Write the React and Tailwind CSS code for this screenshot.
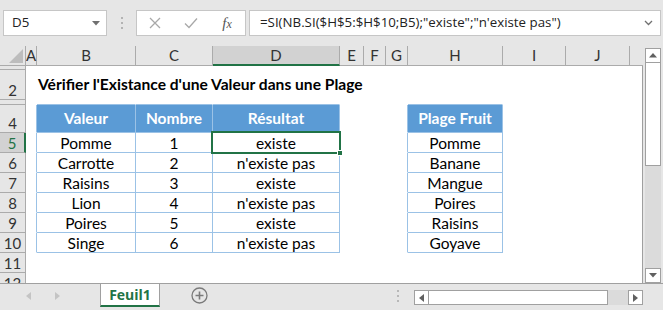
import React from "react";

const t1 = {
  5: ["Pomme", "1", "existe"],
  6: ["Carrotte", "2", "n'existe pas"],
  7: ["Raisins", "3", "existe"],
  8: ["Lion", "4", "n'existe pas"],
  9: ["Poires", "5", "existe"],
  10: ["Singe", "6", "n'existe pas"],
};
const t2 = { 5: "Pomme", 6: "Banane", 7: "Mangue", 8: "Poires", 9: "Raisins", 10: "Goyave" };
const letters = ["", "A", "B", "C", "D", "E", "F", "G", "H", "I", "J", ""];
const rowNums = [1, 2, 3, 4, 5, 6, 7, 8, 9, 10, 11, 12];

function HeaderRow() {
  return (
    <>
      <div className="relative bg-[#e6e6e6] border-r border-b border-[#ababab]">
        <svg className="absolute left-[9px] top-[3px]" width="14" height="14" viewBox="0 0 14 14">
          <polygon points="14,0 14,14 0,14" fill="#bdbdbd" />
        </svg>
      </div>
      {letters.slice(1).map((l, i) => {
        const c = i + 1;
        if (c === 11) return <div key={c} className="bg-[#e6e6e6] border-b border-[#ababab]" />;
        if (c === 4)
          return (
            <div key={c} className="bg-[#d2d2d2] border-r border-r-[#ababab] border-b-2 border-b-[#217346] flex items-center justify-center text-[#333] text-[15px]">
              {l}
            </div>
          );
        return (
          <div key={c} className="bg-[#e6e6e6] border-r border-b border-[#ababab] flex items-center justify-center text-[#333] text-[15px]">
            {l}
          </div>
        );
      })}
    </>
  );
}

function RowHeader({ r }) {
  const showLabel = r !== 1 && r !== 3;
  if (r === 5)
    return (
      <div className="bg-[#d2d2d2] border-r-2 border-r-[#217346] border-b border-b-[#ababab] flex items-end justify-center overflow-hidden">
        <span className="leading-[18px] text-[15px] text-[#217346]">{r}</span>
      </div>
    );
  if (r === 12)
    return (
      <div className="bg-[#e6e6e6] border-r border-[#ababab] overflow-hidden">
        <div className="h-[19px] flex items-end justify-center">
          <span className="leading-[18px] text-[15px] text-[#333]">{r}</span>
        </div>
      </div>
    );
  return (
    <div className="bg-[#e6e6e6] border-r border-b border-[#ababab] flex items-end justify-center overflow-hidden">
      {showLabel && <span className="leading-[18px] text-[15px] text-[#333]">{r}</span>}
    </div>
  );
}

function Cell({ r, c }) {
  const inRows = r >= 4 && r <= 10;
  const inT1 = inRows && c >= 2 && c <= 4;
  const inT2 = inRows && c === 8;
  const rightBlue = inT1 || inT2 || (inRows && (c === 1 || c === 7));
  const bottomBlue = inT1 || inT2 || (r === 3 && ((c >= 2 && c <= 4) || c === 8));
  const isHeader = r === 4 && (inT1 || inT2);
  const rb = rightBlue ? "border-r-[#9bc2e6]" : "border-r-transparent";
  const bb = bottomBlue ? "border-b-[#9bc2e6]" : "border-b-transparent";

  if (c === 11) {
    return <div className="bg-white border-r border-r-[#9f9f9f]" />;
  }

  let content = null;
  if (r === 2 && c === 2) {
    content = (
      <span className="relative z-10 whitespace-nowrap pl-[1px] font-bold text-[15.6px] text-black self-center">
        Vérifier l'Existance d'une Valeur dans une Plage
      </span>
    );
  }
  if (isHeader) {
    const txt = c === 2 ? "Valeur" : c === 3 ? "Nombre" : c === 4 ? "Résultat" : "Plage Fruit";
    return (
      <div className={`bg-[#5b9bd5] border-r border-b ${rb} ${bb} flex items-center justify-center text-white font-bold text-[15.5px]`}>
        {txt}
      </div>
    );
  }
  if (inRows && r >= 5) {
    const txt = inT1 ? t1[r][c - 2] : inT2 ? t2[r] : null;
    if (txt)
      content = <span className="w-full text-center leading-[18px] text-[15.5px] text-black">{txt}</span>;
  }

  return (
    <div className={`relative bg-white border-r border-b ${rb} ${bb} flex items-end`}>
      {content}
      {r === 5 && c === 4 && (
        <>
          <div className="absolute left-[-2px] top-[-2px] w-[130px] h-[23px] border-2 border-[#217346] z-10" />
          <div className="absolute left-[124px] top-[17px] w-[6px] h-[6px] bg-[#217346] border border-white z-20" />
        </>
      )}
    </div>
  );
}

function Toolbar() {
  return (
    <div className="h-[46px] flex items-start pt-[10px] pl-[3px] font-['Open_Sans',sans-serif]">
      <div className="w-[104px] h-[26px] bg-white border border-[#c6c6c6] flex items-center justify-between pl-[8px] pr-[6px]">
        <span className="text-[13.3px] text-[#222]">D5</span>
        <svg width="8" height="5" viewBox="0 0 8 5">
          <polygon points="0,0 8,0 4,4.5" fill="#707070" />
        </svg>
      </div>
      <div className="w-[29px] h-[26px] flex flex-col items-center justify-center gap-[3px]">
        <div className="w-[2px] h-[2px] bg-[#b3b3b3]" />
        <div className="w-[2px] h-[2px] bg-[#b3b3b3]" />
        <div className="w-[2px] h-[2px] bg-[#b3b3b3]" />
      </div>
      <div className="w-[110px] h-[26px] bg-white border border-[#c6c6c6] flex items-center">
        <div className="w-[36px] flex justify-center">
          <svg width="12" height="12" viewBox="0 0 12 12">
            <path d="M1 1 L11 11 M11 1 L1 11" stroke="#a8a8a8" strokeWidth="1.3" fill="none" />
          </svg>
        </div>
        <div className="w-[36px] flex justify-center">
          <svg width="14" height="12" viewBox="0 0 14 12">
            <path d="M1 6.5 L5 10.5 L13 1.5" stroke="#a8a8a8" strokeWidth="1.3" fill="none" />
          </svg>
        </div>
        <div className="w-[36px] flex justify-center">
          <span className="italic font-['Liberation_Serif',serif] text-[15px] text-[#555] leading-none">
            f<span className="text-[12px]">x</span>
          </span>
        </div>
      </div>
      <div className="ml-[3px] w-[412px] h-[26px] bg-white border border-[#c6c6c6] flex items-center justify-between pl-[10px] pr-[7px]">
        <span className="text-[13.3px] text-[#222] whitespace-nowrap">=SI(NB.SI($H$5:$H$10;B5);"existe";"n'existe pas")</span>
        <svg width="9" height="6" viewBox="0 0 9 6">
          <path d="M1 1 L4.5 4.5 L8 1" stroke="#707070" strokeWidth="1.3" fill="none" />
        </svg>
      </div>
    </div>
  );
}

function VScroll() {
  return (
    <div className="w-[20px] pl-[2px] pt-[2px] flex">
      <div className="w-[16px] flex flex-col">
        <div className="h-[15px] bg-white border border-[#a0a0a0] flex items-center justify-center">
          <svg width="8" height="5" viewBox="0 0 8 5"><polygon points="0,4.5 8,4.5 4,0" fill="#606060" /></svg>
        </div>
        <div className="h-[103px] bg-white border border-[#a0a0a0] border-t-0" />
        <div className="flex-1 bg-[#dbdbdb]" />
        <div className="h-[15px] bg-white border border-[#a0a0a0] flex items-center justify-center">
          <svg width="8" height="5" viewBox="0 0 8 5"><polygon points="0,0 8,0 4,4.5" fill="#606060" /></svg>
        </div>
      </div>
    </div>
  );
}

function TabBar() {
  return (
    <div className="h-[27px] border-t border-[#a0a0a0] flex items-start font-['Open_Sans',sans-serif]">
      <div className="w-[100px] h-[23px] flex items-center">
        <svg className="ml-[26px]" width="5" height="8" viewBox="0 0 5 8"><polygon points="5,0 5,8 0,4" fill="#c4c4c4" /></svg>
        <svg className="ml-[24px]" width="5" height="8" viewBox="0 0 5 8"><polygon points="0,0 0,8 5,4" fill="#c4c4c4" /></svg>
      </div>
      <div className="w-[60px] h-[23px] bg-white border-x border-[#a0a0a0] border-b-2 border-b-[#217346] flex items-center justify-center">
        <span className="font-bold text-[14px] text-[#217346] leading-none">Feuil1</span>
      </div>
      <div className="w-[80px] h-[23px] flex items-center">
        <svg className="ml-[31px]" width="17" height="17" viewBox="0 0 17 17">
          <circle cx="8.5" cy="8.5" r="7.5" stroke="#7a7a7a" strokeWidth="1.3" fill="none" />
          <path d="M8.5 4.5 V12.5 M4.5 8.5 H12.5" stroke="#7a7a7a" strokeWidth="1.6" />
        </svg>
      </div>
      <div className="w-[174px] h-[23px] flex items-center justify-end pr-[15px]">
        <div className="flex flex-col gap-[3px] mt-[1px]">
          <div className="w-[2px] h-[2px] bg-[#b8b8b8]" />
          <div className="w-[2px] h-[2px] bg-[#b8b8b8]" />
          <div className="w-[2px] h-[2px] bg-[#b8b8b8]" />
        </div>
      </div>
      <div className="mt-[6px] w-[229px] h-[15px] flex">
        <div className="w-[15px] bg-white border border-[#a0a0a0] flex items-center justify-center">
          <svg width="5" height="8" viewBox="0 0 5 8"><polygon points="5,0 5,8 0,4" fill="#606060" /></svg>
        </div>
        <div className="w-[179px] bg-white border border-l-0 border-[#a0a0a0]" />
        <div className="flex-1 bg-[#dbdbdb]" />
        <div className="w-[15px] bg-white border border-[#a0a0a0] flex items-center justify-center">
          <svg width="5" height="8" viewBox="0 0 5 8"><polygon points="0,0 0,8 5,4" fill="#606060" /></svg>
        </div>
      </div>
    </div>
  );
}

export default function App() {
  return (
    <div className="w-[663px] h-[310px] bg-[#e6e6e6] flex flex-col overflow-hidden font-['Lato',sans-serif]">
      <Toolbar />
      <div className="h-[237px] flex">
        <div className="w-[643px] grid grid-cols-[26px_11px_99px_77px_127px_24px_22px_22px_95px_63px_64px_13px] grid-rows-[20px_4px_30px_5px_28px_20px_20px_20px_20px_20px_20px_20px_10px]">
          <HeaderRow />
          {rowNums.map((r) => (
            <React.Fragment key={r}>
              <RowHeader r={r} />
              {letters.slice(1).map((_, i) => (
                <Cell key={i} r={r} c={i + 1} />
              ))}
            </React.Fragment>
          ))}
        </div>
        <VScroll />
      </div>
      <TabBar />
    </div>
  );
}
